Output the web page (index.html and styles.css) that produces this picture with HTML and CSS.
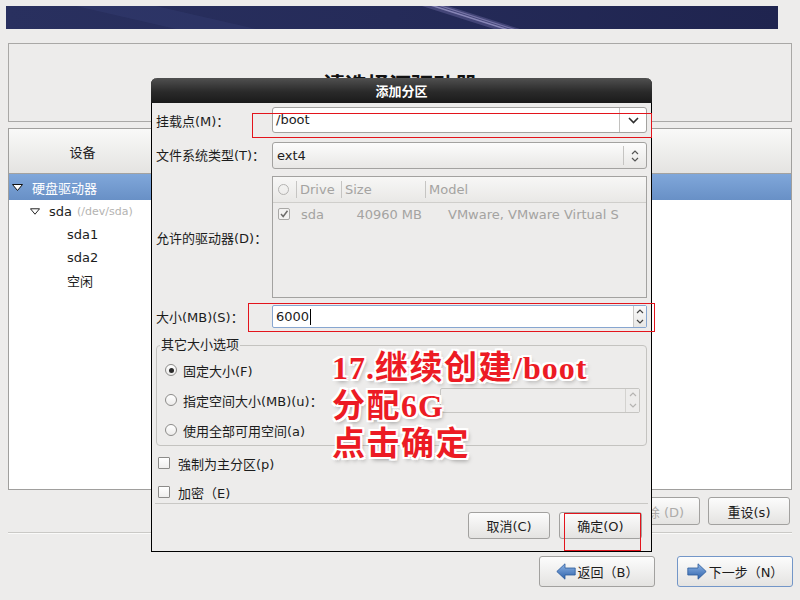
FILE: index.html
```html
<!DOCTYPE html>
<html lang="zh-CN">
<head>
    <meta charset="UTF-8">
    <meta name="viewport" content="width=device-width, initial-scale=1.0">
    <title>添加分区</title>
    <link rel="stylesheet" href="styles.css">
</head>
<body>
    <div class="banner">
        <svg width="772" height="23" viewBox="0 0 772 23">
            <defs>
                <linearGradient id="bannerBg" x1="0" y1="0" x2="1" y2="0">
                    <stop offset="0" stop-color="#29305f"/>
                    <stop offset="0.5" stop-color="#252b59"/>
                    <stop offset="1" stop-color="#1f244f"/>
                </linearGradient>
            </defs>
            <rect width="772" height="23" fill="url(#bannerBg)"/>
            <polygon points="70,0 150,0 250,23 170,23" fill="#4a5590" opacity="0.18"/>
            <polygon points="416,0 442,0 514,23 488,23" fill="#8d88c8" opacity="0.3"/>
            <polygon points="425,0 430,0 502,23 497,23" fill="#c0b9ea" opacity="0.55"/>
            <polygon points="433,0 437,0 509,23 505,23" fill="#c0b9ea" opacity="0.4"/>
        </svg>
    </div>

    <div class="title-box">
        <h1>请选择源驱动器</h1>
    </div>

    <div class="devices">
        <div class="devices__head">
            <span class="devices__col">设备</span>
        </div>
        <ul class="tree">
            <li class="tree__row tree__row--selected">
                <svg class="expander" viewBox="0 0 11 7"><path d="M0.5 0.5 H10.5 L5.5 6.5 Z" fill="#fff" stroke="#111"/></svg>
                硬盘驱动器
            </li>
            <li class="tree__row tree__row--disk">
                <svg class="expander" viewBox="0 0 11 7"><path d="M0.5 0.5 H10.5 L5.5 6.5 Z" fill="#fff" stroke="#111"/></svg>
                sda<span class="tree__path">(/dev/sda)</span>
            </li>
            <li class="tree__row tree__row--part">sda1</li>
            <li class="tree__row tree__row--part">sda2</li>
            <li class="tree__row tree__row--part">空闲</li>
        </ul>
    </div>

    <div class="actions">
        <button class="btn">创建(C)</button>
        <button class="btn">编辑(E)</button>
        <button class="btn btn--off">删除 (D)</button>
        <button class="btn">重设(s)</button>
    </div>
    <div class="sep"></div>
    <div class="nav">
        <button class="btn btn--nav">
            <svg width="20" height="17" viewBox="0 0 20 17">
                <defs>
                    <linearGradient id="arrowBack" x1="0" y1="0" x2="0" y2="1">
                        <stop offset="0" stop-color="#8db4e6"/>
                        <stop offset="1" stop-color="#2e62aa"/>
                    </linearGradient>
                </defs>
                <path d="M0.8 8.5 L9 0.8 V5 H19.2 V12 H9 V16.2 Z" fill="url(#arrowBack)" stroke="#2c5a9b" stroke-width="0.8"/>
            </svg>
            返回（B）
        </button>
        <button class="btn btn--nav btn--focus">
            <svg width="20" height="17" viewBox="0 0 20 17">
                <defs>
                    <linearGradient id="arrowNext" x1="0" y1="0" x2="0" y2="1">
                        <stop offset="0" stop-color="#8db4e6"/>
                        <stop offset="1" stop-color="#2e62aa"/>
                    </linearGradient>
                </defs>
                <path d="M19.2 8.5 L11 0.8 V5 H0.8 V12 H11 V16.2 Z" fill="url(#arrowNext)" stroke="#2c5a9b" stroke-width="0.8"/>
            </svg>
            下一步（N）
        </button>
    </div>

    <div class="dialog">
        <div class="dialog__title">添加分区</div>
        <div class="dialog__body">
            <div class="form">
                <span class="form__label">挂载点(M)：</span>
                <div class="combo-entry">
                    <span class="combo-entry__text">/boot</span>
                    <span class="combo-entry__btn">
                        <svg width="11" height="7" viewBox="0 0 11 7"><path d="M1 1 L5.5 5.5 L10 1" fill="none" stroke="#2e2e2e" stroke-width="1.6"/></svg>
                    </span>
                </div>

                <span class="form__label">文件系统类型(T)：</span>
                <div class="combo">
                    <span class="combo__text">ext4</span>
                    <span class="combo__arrows">
                        <svg width="8" height="14" viewBox="0 0 8 14"><path d="M1 5 L4 2 L7 5 M1 9 L4 12 L7 9" fill="none" stroke="#555" stroke-width="1.2"/></svg>
                    </span>
                </div>

                <span class="form__label">允许的驱动器(D)：</span>
                <div class="drives">
                    <div class="drives__head">
                        <span class="drives__c drives__c--chk"><span class="circle"></span></span>
                        <span class="drives__c drives__c--drive">Drive</span>
                        <span class="drives__c drives__c--size">Size</span>
                        <span class="drives__c drives__c--model">Model</span>
                    </div>
                    <div class="drives__row">
                        <span class="drives__c drives__c--chk">
                            <span class="tick">
                                <svg width="10" height="10" viewBox="0 0 10 10"><path d="M2 5 L4.2 7.5 L8.5 1.8" fill="none" stroke="#6e6d6b" stroke-width="1.5"/></svg>
                            </span>
                        </span>
                        <span class="drives__c drives__c--drive">sda</span>
                        <span class="drives__c drives__c--size">40960 MB</span>
                        <span class="drives__c drives__c--model">VMware, VMware Virtual S</span>
                    </div>
                </div>

                <span class="form__label">大小(MB)(S)：</span>
                <div class="spin spin--focus">
                    <span class="spin__text">6000<i class="caret"></i></span>
                    <span class="spin__btns">
                        <svg width="8" height="5" viewBox="0 0 8 5"><path d="M1 4 L4 1 L7 4" fill="none" stroke="#444" stroke-width="1.2"/></svg>
                        <svg width="8" height="5" viewBox="0 0 8 5"><path d="M1 1 L4 4 L7 1" fill="none" stroke="#444" stroke-width="1.2"/></svg>
                    </span>
                </div>
            </div>

            <fieldset class="group">
                <legend>其它大小选项</legend>
                <div class="radio-row"><span class="radio radio--on"></span>固定大小(F)</div>
                <div class="radio-row">
                    <span class="radio"></span>指定空间大小(MB)(u)：
                    <div class="spin spin--off">
                        <span class="spin__text"></span>
                        <span class="spin__btns">
                            <svg width="8" height="5" viewBox="0 0 8 5"><path d="M1 4 L4 1 L7 4" fill="none" stroke="#b5b4b2" stroke-width="1.2"/></svg>
                            <svg width="8" height="5" viewBox="0 0 8 5"><path d="M1 1 L4 4 L7 1" fill="none" stroke="#b5b4b2" stroke-width="1.2"/></svg>
                        </span>
                    </div>
                </div>
                <div class="radio-row"><span class="radio"></span>使用全部可用空间(a)</div>
            </fieldset>

            <div class="check-row"><span class="box"></span>強制为主分区(p)</div>
            <div class="check-row check-row--last"><span class="box"></span>加密（E)</div>

            <div class="dialog__sep"></div>
            <div class="dialog__buttons">
                <button class="btn btn--dlg">取消(C)</button>
                <button class="btn btn--dlg btn--ok">确定(O)</button>
            </div>
        </div>
    </div>

    <div class="note">17.<span class="note__cjk">继续创建</span>/boot<br><span class="note__cjk">分配</span>6G<br><span class="note__cjk">点击确定</span></div>

    <div class="mark mark--mount"></div>
    <div class="mark mark--size"></div>
    <div class="mark mark--ok"></div>
</body>
</html>
```

FILE: styles.css
```css
*{
    padding: 0;
    margin: 0;
    box-sizing: border-box;
}
body{
    width: 800px;
    height: 600px;
    overflow: hidden;
    position: relative;
    background-color: #edeceb;
    font-family: "DejaVu Sans", "Noto Sans CJK SC", sans-serif;
    font-size: 13px;
    color: #1c1c1c;
}
button{
    font: inherit;
    color: inherit;
}

/* background screen */
.banner{
    width: 772px;
    height: 23px;
    margin: 6px 0 0 6px;
}
.banner svg{
    display: block;
}
.title-box{
    height: 79px;
    margin: 14px 8px 0 8px;
    border: 1px solid #a9a8a6;
    display: flex;
    align-items: center;
    justify-content: center;
}
.title-box h1{
    font-size: 22px;
    font-weight: bold;
    color: #111;
}
.devices{
    height: 362px;
    margin: 6px 8px 0 8px;
    border: 1px solid #a09f9d;
    background-color: #fff;
}
.devices__head{
    height: 45px;
    display: flex;
    align-items: center;
    border-bottom: 1px solid #a3a2a0;
    background: linear-gradient(#f9f9f8, #e4e3e1);
}
.devices__col{
    width: 147px;
    text-align: center;
}
.tree{
    list-style: none;
}
.tree__row{
    height: 23px;
    display: flex;
    align-items: center;
}
.tree__row--selected{
    height: 26px;
    padding-left: 3px;
    color: #fff;
    background: linear-gradient(#80a7da, #6890c6);
}
.tree__row--disk{
    padding-left: 21px;
}
.tree__row--part{
    padding-left: 58px;
}
.expander{
    width: 11px;
    height: 7px;
    margin-right: 9px;
}
.tree__row--disk .expander{
    width: 10px;
}
.tree__path{
    margin-left: 5px;
    font-size: 11px;
    color: #b4b3b1;
}

.btn{
    width: 82px;
    height: 28px;
    border: 1px solid #a2a19f;
    border-radius: 3px;
    background: linear-gradient(#fcfcfc, #e4e3e1);
    display: flex;
    align-items: center;
    justify-content: center;
    gap: 2px;
}
.btn--off{
    color: #acaba9;
}
.actions{
    display: flex;
    justify-content: flex-end;
    gap: 8px;
    margin-top: 7px;
    padding-right: 10px;
}
.sep{
    height: 2px;
    margin: 7px 8px 0 8px;
    border-top: 1px solid #cac9c6;
    border-bottom: 1px solid #fafaf9;
}
.nav{
    display: flex;
    justify-content: flex-end;
    gap: 22px;
    margin-top: 22px;
    padding-right: 7px;
}
.btn--nav{
    width: 116px;
    height: 31px;
}
.btn--focus{
    border-color: #7396c8;
}

/* dialog */
.dialog{
    position: absolute;
    left: 151px;
    top: 78px;
    width: 501px;
    height: 474px;
    border: 1px solid #000;
    border-top: none;
    border-radius: 6px 6px 0 0;
    background-color: #edeceb;
}
.dialog__title{
    height: 25px;
    margin: 0 -1px;
    border-radius: 6px 6px 0 0;
    background: linear-gradient(#505050, #2a2a2a 55%, #1a1a1a);
    color: #fff;
    font-weight: bold;
    display: flex;
    align-items: center;
    justify-content: center;
}
.dialog__body{
    padding: 4px 4px 0 4px;
}
.form{
    display: grid;
    grid-template-columns: 116px 375px;
    grid-template-rows: 26px 29px 122px 23px;
    row-gap: 7px;
    align-items: center;
}
.form__label{
    white-space: nowrap;
}

.combo-entry{
    height: 26px;
    display: flex;
    border: 1px solid #a3a2a0;
    border-radius: 3px;
    background-color: #fff;
}
.combo-entry__text{
    flex: 1;
    padding-left: 3px;
    line-height: 24px;
}
.combo-entry__btn{
    width: 27px;
    border-left: 1px solid #c2c1bf;
    display: flex;
    align-items: center;
    justify-content: center;
}
.combo{
    height: 27px;
    align-self: end;
    display: flex;
    align-items: center;
    border: 1px solid #a3a2a0;
    border-radius: 3px;
    background: linear-gradient(#fcfcfc, #e8e7e5);
}
.combo__text{
    flex: 1;
    padding-left: 4px;
}
.combo__arrows{
    width: 23px;
    height: 19px;
    border-left: 1px solid #c5c4c2;
    display: flex;
    align-items: center;
    justify-content: center;
}

.drives{
    height: 122px;
    border: 1px solid #a3a2a0;
    background-color: #edeceb;
    color: #a4a3a1;
}
.drives__head{
    height: 26px;
    display: flex;
    align-items: center;
    border-bottom: 1px solid #cfcecb;
    background: linear-gradient(#f7f7f6, #e9e8e6);
}
.drives__row{
    height: 22px;
    display: flex;
    align-items: center;
}
.drives__c{
    white-space: nowrap;
}
.drives__c--chk{
    width: 23px;
    padding-left: 5px;
    display: flex;
}
.drives__c--drive{
    width: 45px;
}
.drives__c--size{
    width: 84px;
}
.drives__head .drives__c--drive,
.drives__head .drives__c--size,
.drives__head .drives__c--model{
    height: 17px;
    line-height: 17px;
    padding-left: 3px;
    border-left: 1px solid #c6c5c3;
}
.drives__row .drives__c--drive{
    padding-left: 5px;
}
.drives__row .drives__c--size{
    text-align: right;
    padding-right: 3px;
}
.drives__row .drives__c--model{
    padding-left: 23px;
}
.circle{
    width: 11px;
    height: 11px;
    border: 1px solid #b4b3b1;
    border-radius: 50%;
}
.tick{
    width: 12px;
    height: 12px;
    border: 1px solid #a9a8a6;
    border-radius: 2px;
    background-color: #f3f2f1;
    display: flex;
    align-items: center;
    justify-content: center;
}

.spin{
    display: flex;
    border: 1px solid #a3a2a0;
    border-radius: 2px;
    background-color: #fff;
}
.spin--focus{
    height: 23px;
    border-color: #87a6d0;
}
.spin__text{
    flex: 1;
    padding-left: 3px;
    display: flex;
    align-items: center;
}
.caret{
    width: 1px;
    height: 16px;
    margin-left: 1px;
    background-color: #000;
}
.spin__btns{
    width: 13px;
    border-left: 1px solid #c9c8c6;
    background: linear-gradient(#fafafa, #e8e7e5);
    display: flex;
    flex-direction: column;
    align-items: center;
    justify-content: space-around;
}
.spin--off{
    width: 200px;
    height: 25px;
    margin-left: auto;
    margin-right: 6px;
    border-color: #c6c5c2;
    background-color: #edeceb;
}
.spin--off .spin__btns{
    width: 14px;
    border-left-color: #d3d2cf;
    background: #edeceb;
}

.group{
    margin-top: 9px;
    padding: 2px 0 0 0;
    border: 1px solid #c4c3c0;
    border-radius: 4px;
}
.group legend{
    margin-left: 3px;
    padding: 0 1px;
    line-height: 16px;
}
.radio-row{
    height: 30px;
    padding-left: 8px;
    display: flex;
    align-items: center;
}
.radio{
    width: 12px;
    height: 12px;
    margin-right: 6px;
    border: 1px solid #8c8b89;
    border-radius: 50%;
    background: linear-gradient(#fff, #ecebea);
    display: flex;
    align-items: center;
    justify-content: center;
}
.radio--on::after{
    content: "";
    width: 5px;
    height: 5px;
    border-radius: 50%;
    background-color: #2a2a2a;
}
.check-row{
    height: 20px;
    margin-top: 7px;
    padding-left: 2px;
    display: flex;
    align-items: center;
}
.check-row--last{
    margin-top: 9px;
}
.box{
    width: 12px;
    height: 12px;
    margin-right: 8px;
    border: 1px solid #8c8b89;
    border-radius: 1px;
    background: linear-gradient(#fff, #efeeed);
}
.dialog__sep{
    height: 1px;
    margin: 1px -1px 0 -1px;
    background-color: #c9c8c5;
}
.dialog__buttons{
    display: flex;
    justify-content: flex-end;
    gap: 9px;
    margin-top: 8px;
    padding-right: 5px;
}
.btn--dlg{
    height: 27px;
}
.btn--ok{
    width: 83px;
}

/* tutorial overlays */
.note{
    position: absolute;
    left: 332px;
    top: 349px;
    font-family: "Liberation Serif", "Noto Sans CJK SC", serif;
    font-weight: bold;
    font-size: 32px;
    line-height: 38px;
    letter-spacing: 1px;
    color: #ec1b24;
    text-shadow:
        -2px -2px 0 #fff, 2px -2px 0 #fff, -2px 2px 0 #fff, 2px 2px 0 #fff,
        0 -2px 0 #fff, 0 2px 0 #fff, -2px 0 0 #fff, 2px 0 0 #fff,
        2px 3px 4px rgba(0, 0, 0, 0.35);
}
.note__cjk{
    font-size: 33px;
    letter-spacing: 1.5px;
}
.mark{
    position: absolute;
    border: 1px solid #e3141c;
}
.mark--mount{
    left: 252px;
    top: 113px;
    width: 400px;
    height: 25px;
}
.mark--size{
    left: 248px;
    top: 303px;
    width: 407px;
    height: 29px;
}
.mark--ok{
    left: 564px;
    top: 513px;
    width: 77px;
    height: 38px;
}
```
